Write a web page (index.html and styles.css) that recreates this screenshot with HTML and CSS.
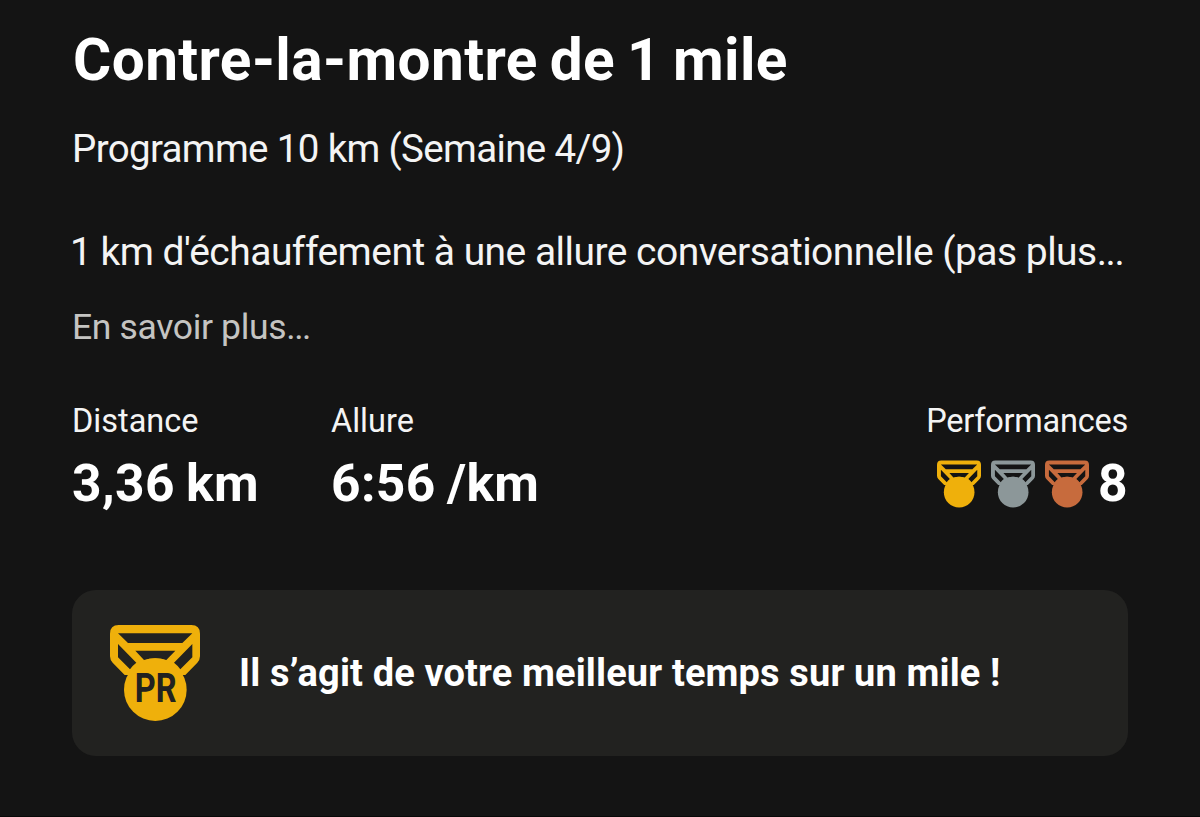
FILE: index.html
```html
<!DOCTYPE html>
<html lang="fr">
<head>
<meta charset="utf-8">
<title>Contre-la-montre de 1 mile</title>
<link rel="stylesheet" href="styles.css">
</head>
<body>
<svg class="defs" width="0" height="0" aria-hidden="true">
  <symbol id="medal" viewBox="60 44 270 288">
    <path fill="currentColor" fill-rule="evenodd" d="M86 44H304Q330 44 330 70V138Q330 149 322 157L286 194H104L68 157Q60 149 60 138V70Q60 44 86 44ZM84 69L114 98H277L307 69ZM136 121L162 149Q195 139 229 149L256 121ZM84 101V141L120 177Q127 166 139 157ZM307 101L252 157Q264 166 271 177L307 141Z"/>
    <circle cx="196" cy="238" r="94" fill="currentColor"/>
  </symbol>
</svg>
<main class="activity">
  <h1 class="title">Contre-la-montre de 1 mile</h1>
  <p class="program">Programme 10 km (Semaine 4/9)</p>
  <p class="description">1 km d'échauffement à une allure conversationnelle (pas plus<span class="dots">...</span></p>
  <p class="more">En savoir plus<span class="dots">...</span></p>
  <section class="stats">
    <div class="stat distance">
      <div class="label">Distance</div>
      <div class="value">3,36 km</div>
    </div>
    <div class="stat pace">
      <div class="label">Allure</div>
      <div class="value">6:56 /km</div>
    </div>
    <div class="stat achievements">
      <div class="label">Performances</div>
      <div class="medals">
        <svg class="medal gold"><use href="#medal"/></svg>
        <svg class="medal silver"><use href="#medal"/></svg>
        <svg class="medal bronze"><use href="#medal"/></svg>
        <span class="value count">8</span>
      </div>
    </div>
  </section>
  <section class="banner">
    <svg class="pr gold" viewBox="60 44 270 288">
      <use href="#medal" x="60" y="44" width="270" height="288"/>
      <text class="pr-text" transform="translate(134 275) scale(.8 1)">PR</text>
    </svg>
    <p class="message">Il s’agit de votre meilleur temps sur un mile !</p>
  </section>
</main>
</body>
</html>
```
FILE: styles.css
```css
* { box-sizing: border-box; }
body {
  margin: 0;
  background: #141414;
  color: #fff;
  font-family: Roboto, "Liberation Sans", sans-serif;
}
h1, p { margin: 0; white-space: nowrap; }
.defs { position: absolute; }
.activity {
  height: 817px;
  padding: 25px 72px 0;
  border-bottom: 1px solid #080808;
}
.title {
  padding-left: 1px;
  font-size: 58.5px;
  line-height: 70px;
  font-weight: 700;
  letter-spacing: 0.42px;
  word-spacing: -3px;
}
.program { margin-top: 29px; font-size: 38.5px; line-height: 50px; letter-spacing: -0.65px; color: #f4f4f4; }
.description { margin: 53px 0 0 -2px; font-size: 39px; line-height: 50px; letter-spacing: -0.53px; color: #f4f4f4; }
.more { margin-top: 27px; font-size: 35.5px; line-height: 46px; letter-spacing: -0.35px; color: #c4c4c2; }
.dots { letter-spacing: -1.4px; }
.stats { display: flex; margin-top: 50px; }
.label { font-size: 32.5px; line-height: 42px; color: #f4f4f4; white-space: nowrap; }
.value { font-size: 51.5px; line-height: 64px; font-weight: 700; white-space: nowrap; }
.stat .value { margin-top: 10px; letter-spacing: 0.4px; word-spacing: -2px; }
.distance { width: 259px; }
.achievements { margin-left: auto; display: flex; flex-direction: column; align-items: flex-end; }
.achievements .label { letter-spacing: -0.25px; }
.medals { display: flex; align-items: center; gap: 10px; height: 64px; margin-top: 10px; }
.medals .count { margin: 0 0 0 -1px; }
.medal { width: 44px; height: 48px; }
.gold { color: #efb00b; }
.silver { color: #8c9799; }
.bronze { color: #c76b3d; }
.banner {
  display: flex;
  align-items: center;
  gap: 39px;
  height: 166px;
  margin-top: 73.5px;
  padding: 0 38px;
  border-radius: 24px;
  background: #222220;
}
.pr { width: 90px; height: 96px; flex: none; }
.pr-text { font-size: 122px; font-weight: 700; fill: #222220; }
.message { font-size: 38px; line-height: 48px; font-weight: 700; letter-spacing: 0.13px; }
```
